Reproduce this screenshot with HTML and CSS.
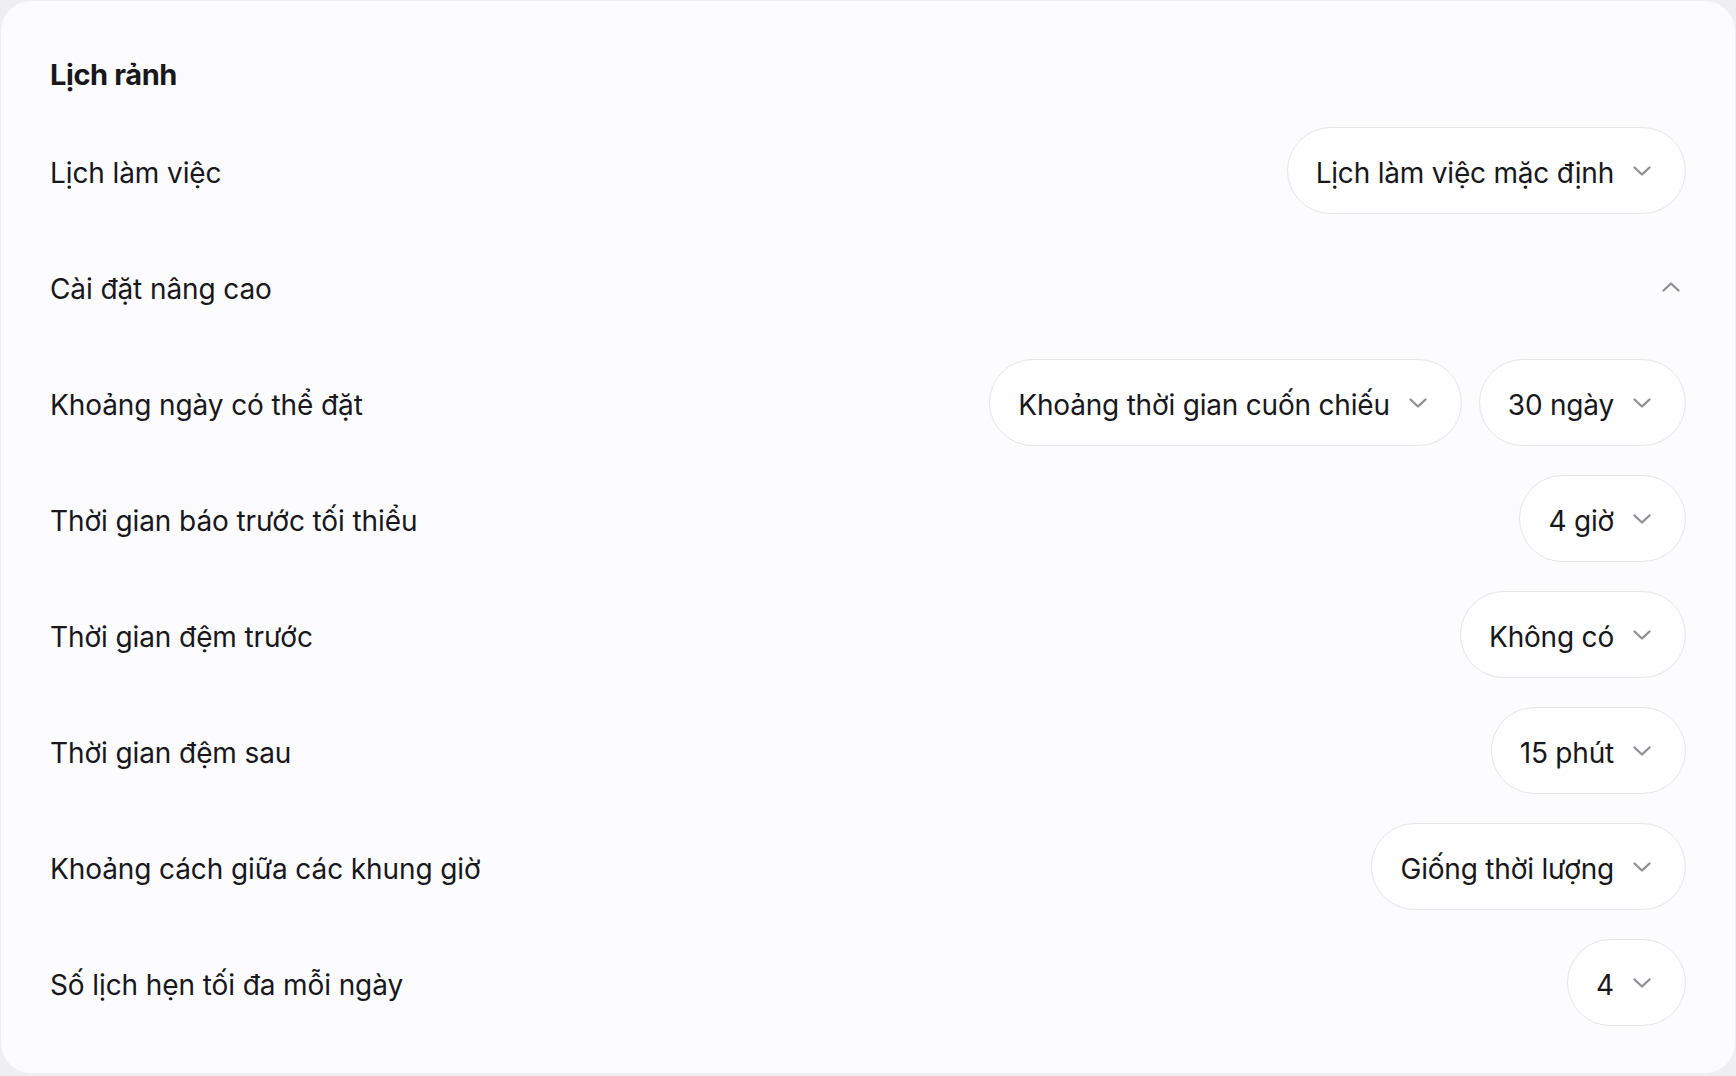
FILE: index.html
```html
<!DOCTYPE html>
<html lang="vi">
<head>
<meta charset="utf-8">
<title>Lịch rảnh</title>
<link rel="stylesheet" href="styles.css">
</head>
<body>
<section class="card">
  <h2 class="title">Lịch rảnh</h2>
  <div class="rows">
    <div class="row">
      <span class="label">Lịch làm việc</span>
      <div class="controls">
        <button class="pill"><span>Lịch làm việc mặc định</span><svg class="chev" viewBox="0 0 18 10"><polyline points="1.5,1.5 9,8.5 16.5,1.5"/></svg></button>
      </div>
    </div>
    <div class="row">
      <span class="label">Cài đặt nâng cao</span>
      <div class="controls">
        <button class="toggle"><svg class="chev" viewBox="0 0 18 10"><polyline points="1.5,8.5 9,1.5 16.5,8.5"/></svg></button>
      </div>
    </div>
    <div class="row">
      <span class="label">Khoảng ngày có thể đặt</span>
      <div class="controls">
        <button class="pill"><span>Khoảng thời gian cuốn chiếu</span><svg class="chev" viewBox="0 0 18 10"><polyline points="1.5,1.5 9,8.5 16.5,1.5"/></svg></button>
        <button class="pill"><span>30 ngày</span><svg class="chev" viewBox="0 0 18 10"><polyline points="1.5,1.5 9,8.5 16.5,1.5"/></svg></button>
      </div>
    </div>
    <div class="row">
      <span class="label">Thời gian báo trước tối thiểu</span>
      <div class="controls">
        <button class="pill"><span>4 giờ</span><svg class="chev" viewBox="0 0 18 10"><polyline points="1.5,1.5 9,8.5 16.5,1.5"/></svg></button>
      </div>
    </div>
    <div class="row">
      <span class="label">Thời gian đệm trước</span>
      <div class="controls">
        <button class="pill"><span>Không có</span><svg class="chev" viewBox="0 0 18 10"><polyline points="1.5,1.5 9,8.5 16.5,1.5"/></svg></button>
      </div>
    </div>
    <div class="row">
      <span class="label">Thời gian đệm sau</span>
      <div class="controls">
        <button class="pill"><span>15 phút</span><svg class="chev" viewBox="0 0 18 10"><polyline points="1.5,1.5 9,8.5 16.5,1.5"/></svg></button>
      </div>
    </div>
    <div class="row">
      <span class="label">Khoảng cách giữa các khung giờ</span>
      <div class="controls">
        <button class="pill"><span>Giống thời lượng</span><svg class="chev" viewBox="0 0 18 10"><polyline points="1.5,1.5 9,8.5 16.5,1.5"/></svg></button>
      </div>
    </div>
    <div class="row">
      <span class="label">Số lịch hẹn tối đa mỗi ngày</span>
      <div class="controls">
        <button class="pill"><span>4</span><svg class="chev" viewBox="0 0 18 10"><polyline points="1.5,1.5 9,8.5 16.5,1.5"/></svg></button>
      </div>
    </div>
  </div>
</section>
</body>
</html>
```
FILE: styles.css
```css
* { box-sizing: border-box; }
html, body { margin: 0; }
body {
  background: #efeff3;
  padding: 1px 1px 0 1px;
  font-family: Inter, "Noto Sans", sans-serif;
  color: #17171c;
}
.card {
  background: #fcfcfe;
  border-radius: 30px;
  height: 1072px;
  padding: 52px 49px 0 49px;
}
.title {
  margin: 0;
  font-size: 29px;
  font-weight: 700;
  line-height: 40px;
  letter-spacing: -0.4px;
  padding-top: 2px;
}
.rows {
  margin-top: 32px;
  display: flex;
  flex-direction: column;
  gap: 29px;
}
.row {
  height: 87px;
  display: flex;
  align-items: center;
  justify-content: space-between;
}
.label {
  font-size: 28px;
  letter-spacing: -0.1px;
  padding-top: 4px;
}
.controls {
  display: flex;
  gap: 17px;
  align-items: center;
}
.pill {
  height: 87px;
  display: flex;
  align-items: center;
  gap: 19px;
  padding: 0 34px 0 28px;
  border: 1.5px solid #e5e5ea;
  border-radius: 44px;
  background: #ffffff;
  font-family: inherit;
  font-size: 28px;
  letter-spacing: -0.2px;
  color: #17171c;
}
.pill span { padding-top: 4px; }
.chev {
  width: 18px;
  height: 10px;
  fill: none;
  stroke: #8e8e96;
  stroke-width: 2.3;
  stroke-linecap: round;
  stroke-linejoin: round;
  flex: none;
}
.toggle {
  border: 0;
  background: transparent;
  padding: 0;
  margin-right: 6px;
  display: flex;
}
```
